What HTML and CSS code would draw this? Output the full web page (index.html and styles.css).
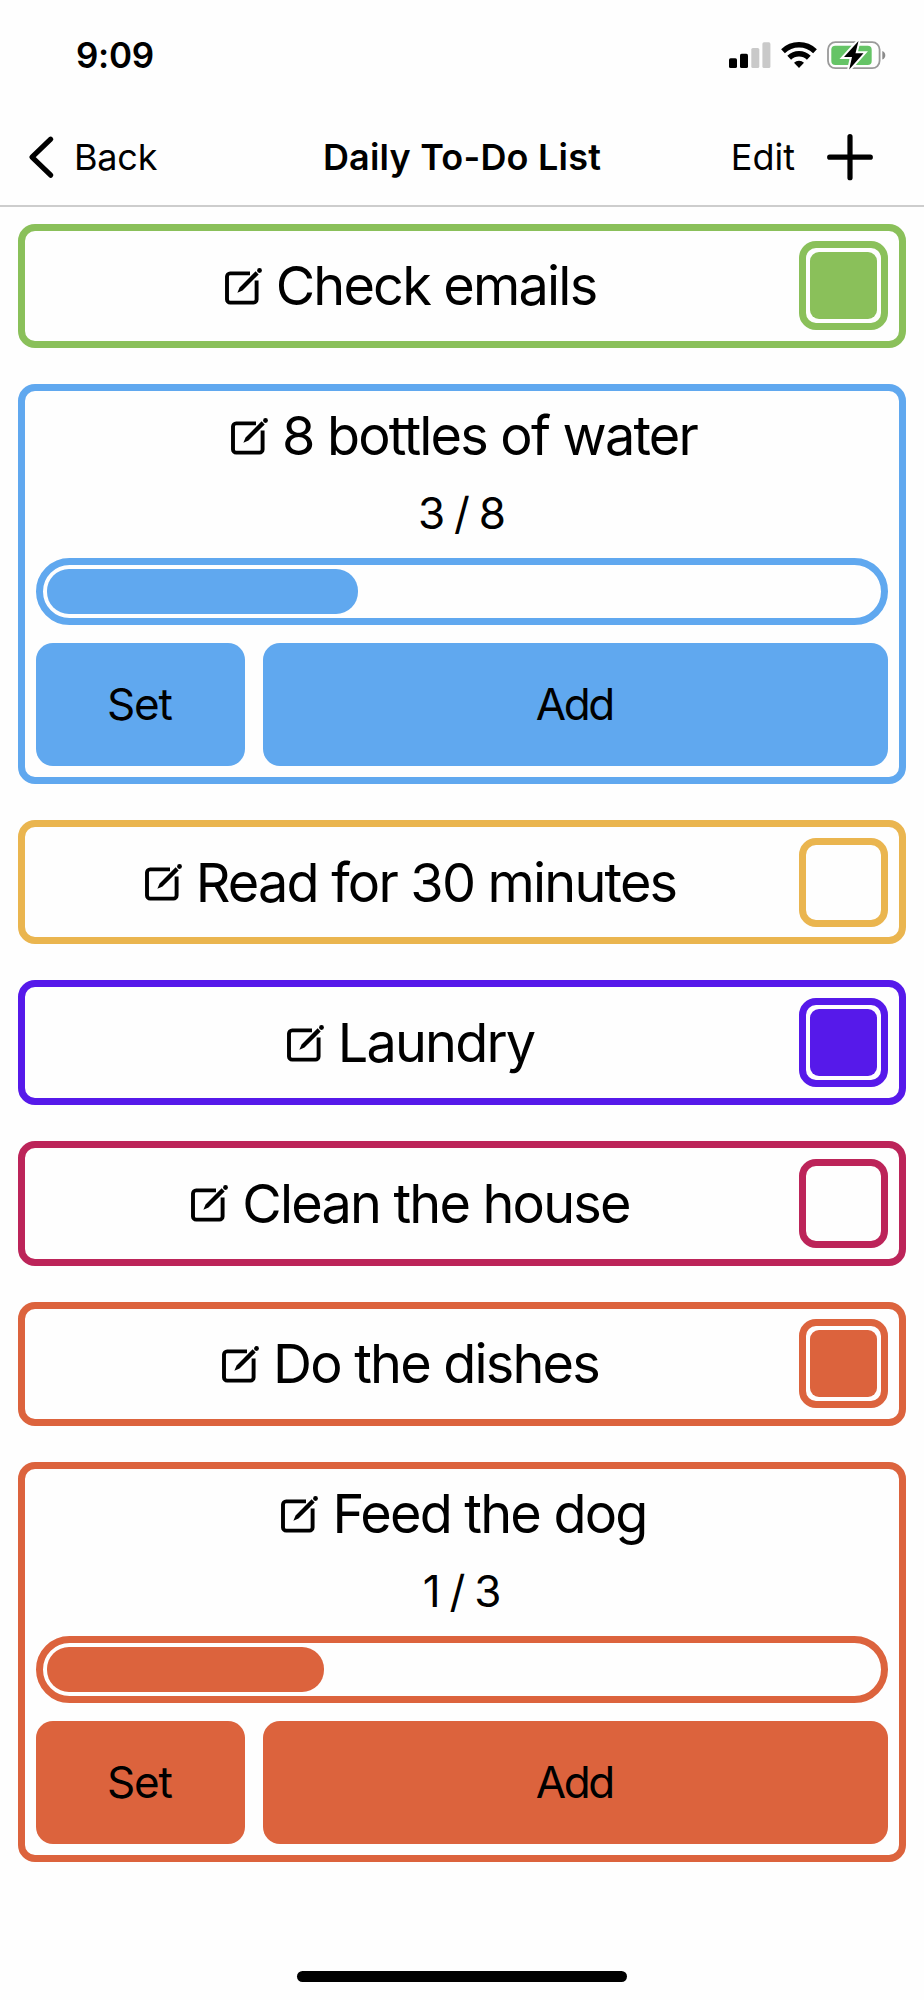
FILE: index.html
```html
<!DOCTYPE html>
<html lang="en">
<head>
  <meta charset="UTF-8">
  <meta name="viewport" content="width=device-width, initial-scale=1.0">
  <title>Daily To-Do List</title>
  <link rel="stylesheet" href="styles.css">
</head>
<body>
  <!-- shared pencil icon -->
  <svg class="defs" width="0" height="0">
    <symbol id="edit-icon" viewBox="0 0 37 37">
      <path d="M25 5.4H5.2a3.200 3.200 0 0 0-3.200 3.200v22.800a3.200 3.200 0 0 0 3.200 3.200h23.200a3.200 3.200 0 0 0 3.200-3.200V12.500" fill="none" stroke="#000" stroke-width="3.900"/>
      <path d="M12.400 24.800l2.200-5.400L30.600 3.300l3.100 3.100-16.200 16z"/>
      <circle cx="34.500" cy="2.500" r="2.400"/>
    </symbol>
  </svg>

  <div class="status-bar">
    <span class="time">9:09</span>
    <div class="status-icons">
      <svg class="signal" width="42" height="28" viewBox="0 0 42 28">
        <rect x="0" y="17.3" width="8" height="9.7" rx="1.6"/>
        <rect x="11" y="12.8" width="8" height="14.2" rx="1.6"/>
        <rect x="22.3" y="7" width="8" height="20" rx="1.6" fill="#c9c9c9"/>
        <rect x="33.4" y="1.3" width="8" height="25.7" rx="1.6" fill="#c9c9c9"/>
      </svg>
      <svg class="wifi" width="36" height="28" viewBox="0 0 36 28">
        <g fill="none" stroke="#000" stroke-width="5.4">
          <path d="M2 10.2a23 23 0 0 1 32 0"/>
          <path d="M8.2 16.8a14 14 0 0 1 19.6 0"/>
        </g>
        <path d="M18 27l-5-5.2a7.4 7.4 0 0 1 10 0z"/>
      </svg>
      <svg class="battery" width="60" height="30" viewBox="0 0 60 30">
        <rect x="1" y="1.2" width="51.6" height="26" rx="7.4" fill="none" stroke="#9a9a9a" stroke-width="1.8"/>
        <path d="M55.3 9.9c4 1.4 4 7.2 0 8.6z" fill="#8a8a8a"/>
        <rect x="4.3" y="4.7" width="40.4" height="19.2" rx="4" fill="#65c466"/>
        <path d="M31.500 0L17 16h8l-2.800 12.500L36.500 12.300h-8z" stroke="#fefefe" stroke-width="4"/>
        <path d="M31.500 0L17 16h8l-2.800 12.500L36.500 12.300h-8z"/>
      </svg>
    </div>
  </div>

  <header class="nav">
    <a class="back">
      <svg width="27" height="44" viewBox="0 0 27 44"><path d="M22.700 4.200L4 22.200l18.700 18" fill="none" stroke="#000" stroke-width="5.200" stroke-linecap="round" stroke-linejoin="round"/></svg>
      <span>Back</span>
    </a>
    <h1>Daily To-Do List</h1>
    <div class="actions">
      <span>Edit</span>
      <svg width="46" height="48" viewBox="0 0 46 48"><path d="M23 3.700v41M2.700 24.200h40.600" stroke="#000" stroke-width="5.200" stroke-linecap="round"/></svg>
    </div>
  </header>

  <main class="list" id="list"></main>

  <div class="home-bar"></div>

<script>
  const tasks = [
    { name: "Check emails", color: "#8ac05a", done: true },
    { name: "8 bottles of water", color: "#60a8ef", count: 3, total: 8 },
    { name: "Read for 30 minutes", color: "#eab54f", done: false },
    { name: "Laundry", color: "#5619ea", done: true },
    { name: "Clean the house", color: "#bc2459", done: false },
    { name: "Do the dishes", color: "#dc633d", done: true },
    { name: "Feed the dog", color: "#dc633d", count: 1, total: 3 }
  ];

  const list = document.getElementById("list");
  tasks.forEach(function(task) {
    const card = document.createElement("section");
    card.style.setProperty("--color", task.color);
    const title = `<h2 class="title"><svg class="edit"><use href="#edit-icon"/></svg><span>${task.name}</span></h2>`;

    if (task.total) {
      card.className = "card counter";
      card.innerHTML = `${title}
        <p class="count">${task.count} / ${task.total}</p>
        <div class="progress"><div class="fill" style="width: ${task.count / task.total * 100}%"></div></div>
        <div class="buttons"><button class="set">Set</button><button class="add">Add</button></div>`;
    } else {
      card.className = "card check";
      card.innerHTML = `${title}<div class="checkbox${task.done ? " done" : ""}"></div>`;
    }
    list.appendChild(card);
  });
</script>
</body>
</html>
```

FILE: styles.css
```css
* {
  box-sizing: border-box;
}

body {
  margin: 0;
  height: 2000px;
  display: flex;
  flex-direction: column;
  font-family: Inter, "Liberation Sans", sans-serif;
  background-color: #fefefe;
  color: #000;
  overflow: hidden;
}

.defs {
  display: none;
}

h1, h2, p {
  margin: 0;
  font-weight: 400;
}

/* status bar */
.status-bar {
  flex: none;
  height: 108px;
  padding: 0 37px 0 76px;
  display: flex;
  justify-content: space-between;
}

.time {
  margin-top: 34px;
  font-size: 35px;
  line-height: 42px;
  font-weight: 600;
  letter-spacing: -0.3px;
}

.status-icons {
  display: flex;
  margin-top: 41px;
}

.wifi {
  margin-left: 10px;
}

.battery {
  margin-left: 10px;
}

/* navigation */
.nav {
  flex: none;
  height: 99px;
  padding: 0 28px;
  display: grid;
  grid-template-columns: 1fr auto 1fr;
  align-items: center;
  border-bottom: 2px solid #cdcdcd;
  font-size: 36px;
  line-height: 44px;
}

.nav h1 {
  font-size: 36px;
  font-weight: 600;
  letter-spacing: 0.2px;
}

.back, .actions {
  display: flex;
  align-items: center;
}

.back {
  gap: 19px;
  letter-spacing: -0.2px;
}

.actions {
  justify-content: flex-end;
  gap: 32px;
  margin-right: 23px;
}

/* task cards */
.list {
  flex: 1;
  padding: 16.6px 18px 0;
  display: flex;
  flex-direction: column;
  gap: 36px;
}

.card {
  flex: none;
  border: 7px solid var(--color);
  border-radius: 17px;
  padding: 11px;
}

.check {
  height: 124.6px;
  display: flex;
  align-items: center;
}

.title {
  flex: 1;
  display: flex;
  align-items: center;
  justify-content: center;
  gap: 14px;
  padding-top: 1px;
  font-size: 54px;
  line-height: 64px;
  letter-spacing: -1.8px;
}

.edit {
  width: 37px;
  height: 37px;
}

.checkbox {
  width: 89px;
  height: 89px;
  margin-left: 14px;
  padding: 4px;
  border: 7px solid var(--color);
  border-radius: 17px;
}

.checkbox.done::before {
  content: "";
  display: block;
  height: 100%;
  border-radius: 9px;
  background-color: var(--color);
}

.counter {
  height: 399.6px;
  display: flex;
  flex-direction: column;
}

.counter .title {
  flex: none;
  padding: 2px 0 0 4px;
}

.count {
  margin: 17px 0;
  font-size: 44px;
  line-height: 56px;
  word-spacing: -3.5px;
  text-align: center;
}

.progress {
  height: 67px;
  padding: 4px;
  border: 7px solid var(--color);
  border-radius: 34px;
}

.fill {
  height: 100%;
  border-radius: 22px;
  background-color: var(--color);
}

.buttons {
  flex: 1;
  display: flex;
  gap: 18px;
  margin-top: 18px;
}

.buttons button {
  padding: 0 2px 0 0;
  border: none;
  border-radius: 17px;
  background-color: var(--color);
  color: #000;
  font-family: inherit;
  font-size: 44px;
}

.buttons .set {
  width: 208.5px;
  letter-spacing: -1.2px;
}

.buttons .add {
  flex: 1;
  letter-spacing: -2.4px;
}

/* home indicator */
.home-bar {
  flex: none;
  width: 330px;
  height: 11px;
  margin: 0 auto 18px;
  border-radius: 6px;
  background-color: #000;
}
```
